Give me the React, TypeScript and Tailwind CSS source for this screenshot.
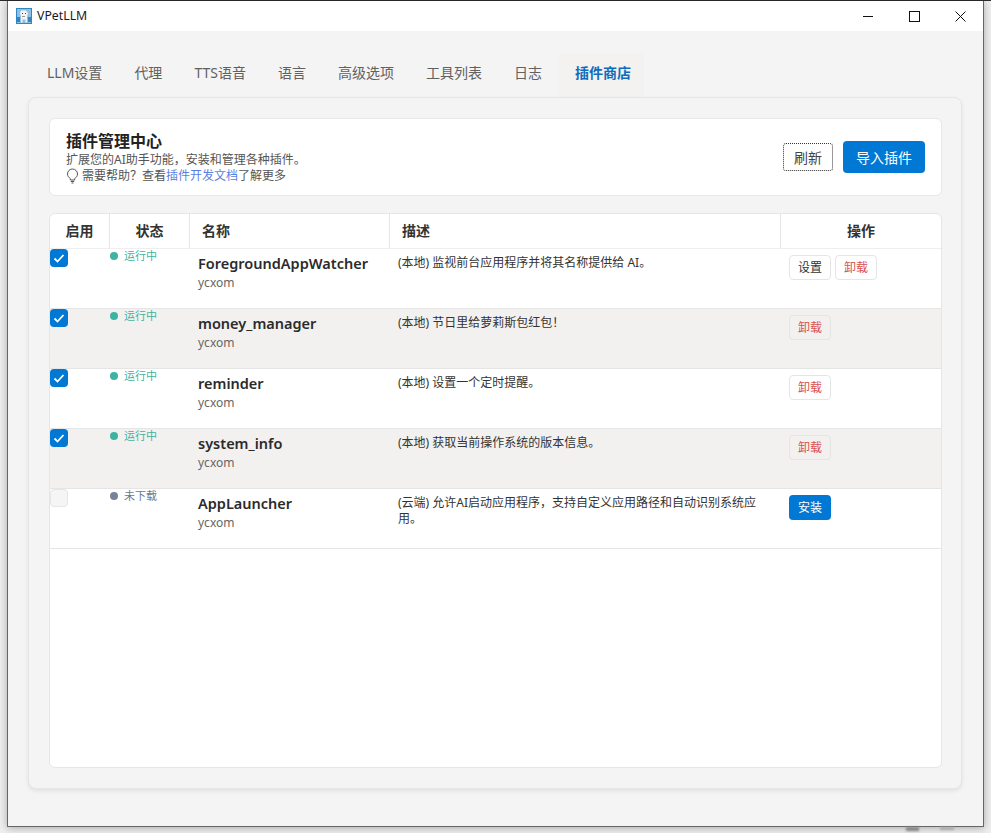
import React from "react";

const font = { fontFamily: '"Noto Sans","Noto Sans CJK SC",sans-serif' };

type Row = { on: boolean; status: string; name: string; desc: string; actions: string[] };
const rows: Row[] = [
  { on: true, status: "运行中", name: "ForegroundAppWatcher", desc: "(本地) 监视前台应用程序并将其名称提供给 AI。", actions: ["设置", "卸载"] },
  { on: true, status: "运行中", name: "money_manager", desc: "(本地) 节日里给萝莉斯包红包！", actions: ["卸载"] },
  { on: true, status: "运行中", name: "reminder", desc: "(本地) 设置一个定时提醒。", actions: ["卸载"] },
  { on: true, status: "运行中", name: "system_info", desc: "(本地) 获取当前操作系统的版本信息。", actions: ["卸载"] },
  { on: false, status: "未下载", name: "AppLauncher", desc: "(云端) 允许AI启动应用程序，支持自定义应用路径和自动识别系统应用。", actions: ["安装"] },
];
const tabs = ["LLM设置", "代理", "TTS语音", "语言", "高级选项", "工具列表", "日志", "插件商店"];

function Logo() {
  return (
    <svg width="16" height="16" viewBox="0 0 16 16">
      <rect width="16" height="16" fill="#2f86c5" />
      <rect x="1" y="1" width="14" height="14" fill="#8fc0e2" />
      <path d="M1 9h3v5H1zM12 9h3v5h-3z" fill="#2f86c5" />
      <path d="M5 2.500h5l2 3-1 3v6H9.500v-3h-3v3H5v-6l-1-3z" fill="#f4f4f4" />
      <rect x="6" y="5" width="1" height="1" fill="#444" />
      <rect x="9" y="5" width="1" height="1" fill="#444" />
      <path d="M6 8h3v1H6z" fill="#999" />
    </svg>
  );
}

function Bulb() {
  return (
    <svg width="13" height="16" viewBox="0 0 13 16" fill="none" stroke="#555" strokeWidth="1">
      <path d="M4.300 10.500C3 9.500 1.500 8.300 1.500 6a5 5 0 0 1 10 0c0 2.300-1.500 3.500-2.800 4.500v1.500H4.300z" />
      <path d="M4.800 13.500h3.400M5.500 15h2" />
    </svg>
  );
}

function Check({ on }: { on: boolean }) {
  if (!on)
    return <div className="w-[18px] h-[18px] rounded-[4px] bg-[#f5f5f5] border border-[#e6e6e6]" />;
  return (
    <div className="w-[18px] h-[18px] rounded-[4px] bg-[#0078d4] flex items-center justify-center">
      <svg width="14" height="14" viewBox="0 0 14 14" fill="none" stroke="#fff" strokeWidth="1.800">
        <path d="M2.500 7.500l3 3 6-6.500" />
      </svg>
    </div>
  );
}

function Action({ label }: { label: string }) {
  if (label === "安装")
    return (
      <button className="w-[42px] h-[25px] rounded-[4px] bg-[#0078d4] text-white text-[12px] leading-none">
        {label}
      </button>
    );
  const red = label === "卸载";
  return (
    <button
      className={
        "w-[42px] h-[25px] rounded-[4px] border border-[#e5e5e5] text-[12px] leading-none " +
        (red ? "text-[#d9534f]" : "text-[#333333]")
      }
    >
      {label}
    </button>
  );
}

export default function App() {
  return (
    <div style={font} className="relative w-[991px] h-[833px] overflow-hidden bg-[#efefef] pl-[7px] pt-px shadow-[inset_0_1px_0_#2b2b2b]">
      <div className="w-[977px] h-[826px] flex flex-col bg-[#f4f4f4] border-l border-r border-b border-[#666666] shadow-[0_1px_8px_rgba(0,0,0,0.3)]">
        <div className="h-[30px] shrink-0 bg-white flex items-center pl-2 text-[12px] text-[#1a1a1a]">
          <Logo />
          <span className="ml-[5px] text-[12.3px]">VPetLLM</span>
          <div className="ml-auto flex items-center text-black">
            <div className="w-[46px] flex justify-center">
              <svg width="11" height="11" viewBox="0 0 11 11" stroke="#111" fill="none"><path d="M0 5.500h10" /></svg>
            </div>
            <div className="w-[46px] flex justify-center">
              <svg width="11" height="11" viewBox="0 0 11 11" stroke="#111" fill="none"><rect x="0.500" y="0.500" width="10" height="10" /></svg>
            </div>
            <div className="w-[46px] flex justify-center">
              <svg width="11" height="11" viewBox="0 0 11 11" stroke="#111" fill="none"><path d="M0.500 0.500l10 10M10.500 0.500l-10 10" /></svg>
            </div>
          </div>
        </div>

        <div className="flex-1 flex flex-col pl-5 pr-[21px] pt-[22px] pb-[37px] min-h-0">
          <div className="h-[44px] shrink-0 flex pl-[3px] text-[14px] text-[#616161]">
            {tabs.map((t, i) => {
              const active = i === 7;
              return (
                <div
                  key={t}
                  className={
                    "px-4 pb-[5px] flex items-center rounded-t-[4px] " +
                    (active ? "bg-[#f4f2f0] text-[#0f6cbd] font-bold pl-[17px] pr-[13px]" : "")
                  }
                >
                  {t}
                </div>
              );
            })}
          </div>

          <div className="flex-1 min-h-0 flex flex-col gap-[17px] rounded-[8px] border border-[#e6e6e6] bg-[#f4f4f4] shadow-[0_2px_4px_rgba(0,0,0,0.08)] pl-[20px] pr-[19px] pt-5 pb-5">
            <div className="h-[78px] shrink-0 rounded-[6px] bg-white border border-[#e8e8e8] flex items-center pl-4 pr-4">
              <div className="flex flex-col">
                <div className="text-[16px] leading-[22px] font-bold text-[#222222]">插件管理中心</div>
                <div className="text-[12px] leading-[16px] text-[#555555]">扩展您的AI助手功能，安装和管理各种插件。</div>
                <div className="text-[12px] leading-[16px] text-[#555555] flex items-center">
                  <Bulb />
                  <span className="ml-[3px]">需要帮助？查看</span>
                  <span className="text-[#5b7fe0]">插件开发文档</span>
                  <span>了解更多</span>
                </div>
              </div>
              <div className="ml-auto flex items-center gap-[10px]">
                <button className="w-[50px] h-[28px] rounded-[3px] bg-white border border-dotted border-[#333333] text-[14px] text-[#444444]">
                  刷新
                </button>
                <button className="w-[82px] h-[32px] rounded-[4px] bg-[#0078d4] text-white text-[14px]">
                  导入插件
                </button>
              </div>
            </div>

            <div className="flex-1 min-h-0 rounded-[6px] bg-white border border-[#e6e6e6] flex flex-col">
              <div className="h-[35px] shrink-0 flex text-[14px] font-bold text-[#333333] border-b border-[#eeeeee]">
                <div className="w-[60px] pb-[2px] border-r border-[#e5e5e5] flex items-center justify-center">启用</div>
                <div className="w-[80px] pb-[2px] border-r border-[#e5e5e5] flex items-center justify-center">状态</div>
                <div className="w-[200px] pb-[2px] border-r border-[#e5e5e5] flex items-center pl-3">名称</div>
                <div className="w-[391px] pb-[2px] border-r border-[#e5e5e5] flex items-center pl-3">描述</div>
                <div className="flex-1 pb-[2px] flex items-center justify-center">操作</div>
              </div>
              {rows.map((r, i) => (
                <div
                  key={r.name}
                  className={"h-[60px] shrink-0 flex border-b border-[#e5e5e5] " + (i % 2 === 1 ? "bg-[#f2f1f0]" : "bg-white")}
                >
                  <div className="w-[60px]">
                    <Check on={r.on} />
                  </div>
                  <div className={"w-[80px] flex items-start text-[11px] leading-[14px] " + (r.on ? "text-[#3fb3a3]" : "text-[#6b7a90]")}>
                    <span className={"w-[8px] h-[8px] mt-[3px] rounded-full " + (r.on ? "bg-[#3fb3a3]" : "bg-[#77839a]")} />
                    <span className="ml-[6px]">{r.status}</span>
                  </div>
                  <div className="w-[200px] pl-2 pt-[4px]">
                    <div className="text-[14.5px] leading-[20px] font-semibold text-[#2b2b2b]">{r.name}</div>
                    <div className="text-[12px] leading-[18px] mt-px text-[#666666]">ycxom</div>
                  </div>
                  <div className="w-[391px] pl-2 pr-[18px] pt-[6px] text-[12px] leading-[16px] text-[#333333]">{r.desc}</div>
                  <div className="flex-1 pl-2 pt-[6px] flex items-start gap-1">
                    {r.actions.map((a) => (
                      <Action key={a} label={a} />
                    ))}
                  </div>
                </div>
              ))}
            </div>
          </div>
        </div>
      </div>
      <div className="absolute left-[906px] top-[827px] w-[13px] h-[4px] bg-[#888888] blur-[1px]" />
      <div className="absolute left-[940px] top-[827px] w-[14px] h-[3px] bg-[#aaaaaa] blur-[1px]" />
    </div>
  );
}
